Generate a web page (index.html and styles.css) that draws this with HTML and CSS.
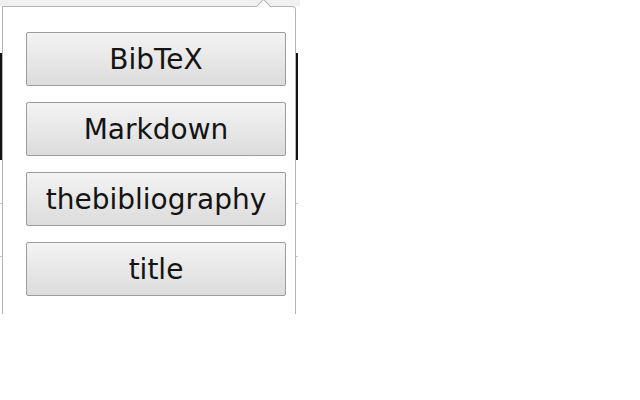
FILE: index.html
```html
<!DOCTYPE html>
<html>
<head>
<meta charset="utf-8">
<link rel="stylesheet" href="styles.css">
</head>
<body>
<div class="page">
  <div class="bg">
    <div class="bg-top"></div>
    <div class="bg-band"></div>
    <div class="bg-line line-a"></div>
    <div class="bg-line line-b"></div>
  </div>
  <div class="popup">
    <div class="list">
      <button class="btn">BibTeX</button>
      <button class="btn">Markdown</button>
      <button class="btn">thebibliography</button>
      <button class="btn">title</button>
    </div>
  </div>
</div>
</body>
</html>
```

FILE: styles.css
```css
html, body {
  margin: 0;
  padding: 0;
  background: #ffffff;
}
.page {
  position: relative;
  width: 640px;
  height: 400px;
  overflow: hidden;
}
.bg {
  position: absolute;
  left: 0;
  top: 0;
  width: 298px;
  height: 320px;
}
.bg-top {
  position: absolute;
  left: 0;
  top: 0;
  width: 300px;
  height: 6px;
  background: #f0f0f0;
}
.bg-band {
  position: absolute;
  left: 0;
  top: 53px;
  width: 298px;
  height: 107px;
  background: #121212;
}
.bg-line {
  position: absolute;
  left: 0;
  width: 298px;
  height: 1px;
  background: #c8c8c8;
}
.line-a { top: 203px; }
.line-b { top: 256px; }

.popup {
  position: relative;
  margin: 6px 0 0 2px;
  width: 292px;
  height: 307px;
  background: #ffffff;
  border: 1px solid #b4b4b4;
  border-bottom: none;
  border-top-right-radius: 4px;
  border-top-left-radius: 1px;
}
.popup::before {
  content: "";
  position: absolute;
  left: 255px;
  top: -6px;
  width: 10px;
  height: 10px;
  background: #ffffff;
  border-left: 1px solid #b4b4b4;
  border-top: 1px solid #b4b4b4;
  transform: rotate(45deg);
}
.list {
  display: flex;
  flex-direction: column;
  gap: 16px;
  padding: 25px 0 0 23px;
}
.btn {
  box-sizing: border-box;
  width: 260px;
  height: 54px;
  margin: 0;
  padding: 2px 0 0 0;
  border: 1px solid #9c9c9c;
  border-radius: 2px;
  background: linear-gradient(#f3f3f3, #dcdcdc);
  color: #141414;
  font-family: "DejaVu Sans", sans-serif;
  font-size: 28px;
  line-height: 50px;
  text-align: center;
}
```
